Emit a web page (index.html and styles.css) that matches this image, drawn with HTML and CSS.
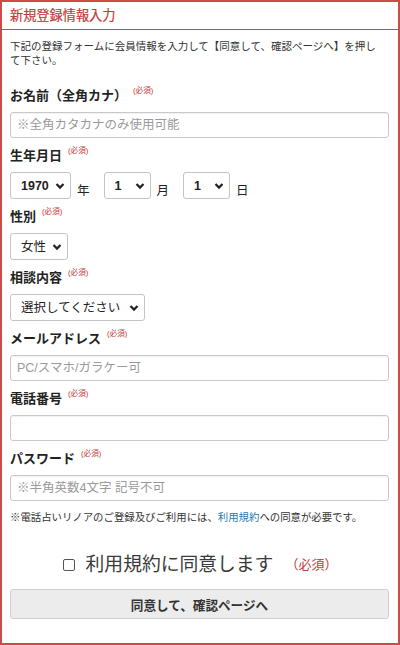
FILE: index.html
```html
<!DOCTYPE html>
<html lang="ja">
<head>
<meta charset="utf-8">
<title>新規登録情報入力</title>
<link rel="stylesheet" href="styles.css">
</head>
<body>
<div class="frame">
  <div class="header">新規登録情報入力</div>
  <div class="body">
    <p class="intro">下記の登録フォームに会員情報を入力して【同意して、確認ページへ】を押して下さい。</p>

    <div class="field first">
      <div class="label">お名前（全角カナ）<span class="req">(必須)</span></div>
      <input class="text" type="text" placeholder="※全角カタカナのみ使用可能">
    </div>

    <div class="field">
      <div class="label">生年月日<span class="req">(必須)</span></div>
      <div class="daterow">
        <span class="sel w-year"><select><option>1970</option></select><svg class="chev" viewBox="0 0 10 8"><path d="M1.5 2 L5 5.6 L8.5 2" fill="none" stroke="#222" stroke-width="2.2"/></svg></span>
        <span class="unit">年</span>
        <span class="sel w-md"><select><option>1</option></select><svg class="chev" viewBox="0 0 10 8"><path d="M1.5 2 L5 5.6 L8.5 2" fill="none" stroke="#222" stroke-width="2.2"/></svg></span>
        <span class="unit">月</span>
        <span class="sel w-md"><select><option>1</option></select><svg class="chev" viewBox="0 0 10 8"><path d="M1.5 2 L5 5.6 L8.5 2" fill="none" stroke="#222" stroke-width="2.2"/></svg></span>
        <span class="unit">日</span>
      </div>
    </div>

    <div class="field">
      <div class="label">性別<span class="req">(必須)</span></div>
      <span class="sel w-sex"><select><option>女性</option></select><svg class="chev" viewBox="0 0 10 8"><path d="M1.5 2 L5 5.6 L8.5 2" fill="none" stroke="#222" stroke-width="2.2"/></svg></span>
    </div>

    <div class="field">
      <div class="label">相談内容<span class="req">(必須)</span></div>
      <span class="sel w-topic"><select><option>選択してください</option></select><svg class="chev" viewBox="0 0 10 8"><path d="M1.5 2 L5 5.6 L8.5 2" fill="none" stroke="#222" stroke-width="2.2"/></svg></span>
    </div>

    <div class="field">
      <div class="label">メールアドレス<span class="req">(必須)</span></div>
      <input class="text" type="text" placeholder="PC/スマホ/ガラケー可">
    </div>

    <div class="field">
      <div class="label">電話番号<span class="req">(必須)</span></div>
      <input class="text" type="text">
    </div>

    <div class="field">
      <div class="label">パスワード<span class="req">(必須)</span></div>
      <input class="text" type="text" placeholder="※半角英数4文字 記号不可">
    </div>

    <p class="note">※電話占いリノアのご登録及びご利用には、<a href="#" class="link">利用規約</a>への同意が必要です。</p>

    <label class="agree"><span class="box"></span><span class="agree-text">利用規約に同意します</span><span class="agree-req">（必須）</span></label>

    <button class="submit" type="button">同意して、確認ページへ</button>
  </div>
</div>
</body>
</html>
```
FILE: styles.css
```css
html, body {
  margin: 0;
  padding: 0;
  background: #fff;
}
body {
  font-family: "Liberation Sans", "Noto Sans CJK JP", sans-serif;
  color: #333;
}
.frame {
  box-sizing: border-box;
  width: 400px;
  height: 645px;
  border: 2px solid #d04848;
  overflow: hidden;
}
.header {
  height: 27px;
  line-height: 27px;
  padding-left: 8px;
  border-bottom: 1px solid #d04848;
  color: #c23a3a;
  font-size: 13.2px;
  -webkit-text-stroke: 0.2px #c23a3a;
}
.body {
  padding: 0 8px;
}
.intro {
  width: 374px;
  margin: 9px 0 0;
  font-size: 10.5px;
  line-height: 14px;
  color: #333;
}
.field {
  margin-top: 9px;
}
.field.first {
  margin-top: 20px;
}
.label {
  height: 18px;
  font-size: 13px;
  line-height: 18px;
  font-weight: bold;
  color: #222;
  margin-bottom: 7px;
  white-space: nowrap;
}
.req {
  position: relative;
  top: -7px;
  font-size: 7.6px;
  line-height: 0;
  font-weight: normal;
  color: #c23a3a;
  margin-left: 6px;
}
.text {
  box-sizing: border-box;
  display: block;
  width: 379px;
  height: 26px;
  margin: 0;
  padding: 0 6px;
  border: 1px solid #c9c9c9;
  border-radius: 3px;
  box-shadow: inset 0 1px 1px rgba(0,0,0,0.06);
  font-family: "Liberation Sans", "Noto Sans CJK JP", sans-serif;
  font-size: 12.5px;
  color: #333;
  background: #fff;
  outline: none;
}
.text::placeholder {
  color: #9a9a9a;
}
.daterow {
  display: flex;
  align-items: flex-end;
  height: 27px;
}
.sel {
  position: relative;
  display: block;
  height: 27px;
}
.sel select {
  box-sizing: border-box;
  -webkit-appearance: none;
  appearance: none;
  display: block;
  width: 100%;
  height: 27px;
  margin: 0;
  padding: 0 0 0 10px;
  border: 1px solid #c4c4c4;
  border-radius: 3px;
  background: #fff;
  font-family: "Liberation Sans", "Noto Sans CJK JP", sans-serif;
  font-size: 12.5px;
  font-weight: bold;
  color: #222;
  outline: none;
}
.chev {
  position: absolute;
  right: 6px;
  top: 10px;
  width: 10px;
  height: 8px;
  pointer-events: none;
}
.w-year { width: 61px; }
.w-md { width: 47px; }
.w-sex { width: 58px; }
.w-topic { width: 135px; }
.w-sex select, .w-topic select { font-weight: normal; }
.unit {
  font-size: 12.5px;
  color: #222;
  line-height: 16px;
  margin: 0 14px 0 6px;
}
.note {
  margin: 10px 0 0;
  font-size: 10.4px;
  line-height: 14px;
  color: #333;
}
.link {
  color: #2d79b0;
  text-decoration: none;
}
.agree {
  display: flex;
  align-items: center;
  justify-content: center;
  margin-top: 28px;
  height: 24px;
}
.box {
  box-sizing: border-box;
  width: 12px;
  height: 12px;
  border: 1px solid #555;
  border-radius: 2px;
  background: #fff;
  margin-right: 11px;
}
.agree-text {
  font-size: 18.8px;
  color: #3a3a3a;
  line-height: 24px;
}
.agree-req {
  font-size: 13px;
  color: #c23a3a;
  margin-left: 12px;
  line-height: 24px;
}
.submit {
  display: block;
  box-sizing: border-box;
  width: 379px;
  height: 30px;
  margin: 12px 0 0;
  padding: 0;
  border: 1px solid #cfcfcf;
  border-radius: 3px;
  background: #ececec;
  font-family: "Liberation Sans", "Noto Sans CJK JP", sans-serif;
  font-size: 12.6px;
  font-weight: bold;
  color: #333;
}
```
